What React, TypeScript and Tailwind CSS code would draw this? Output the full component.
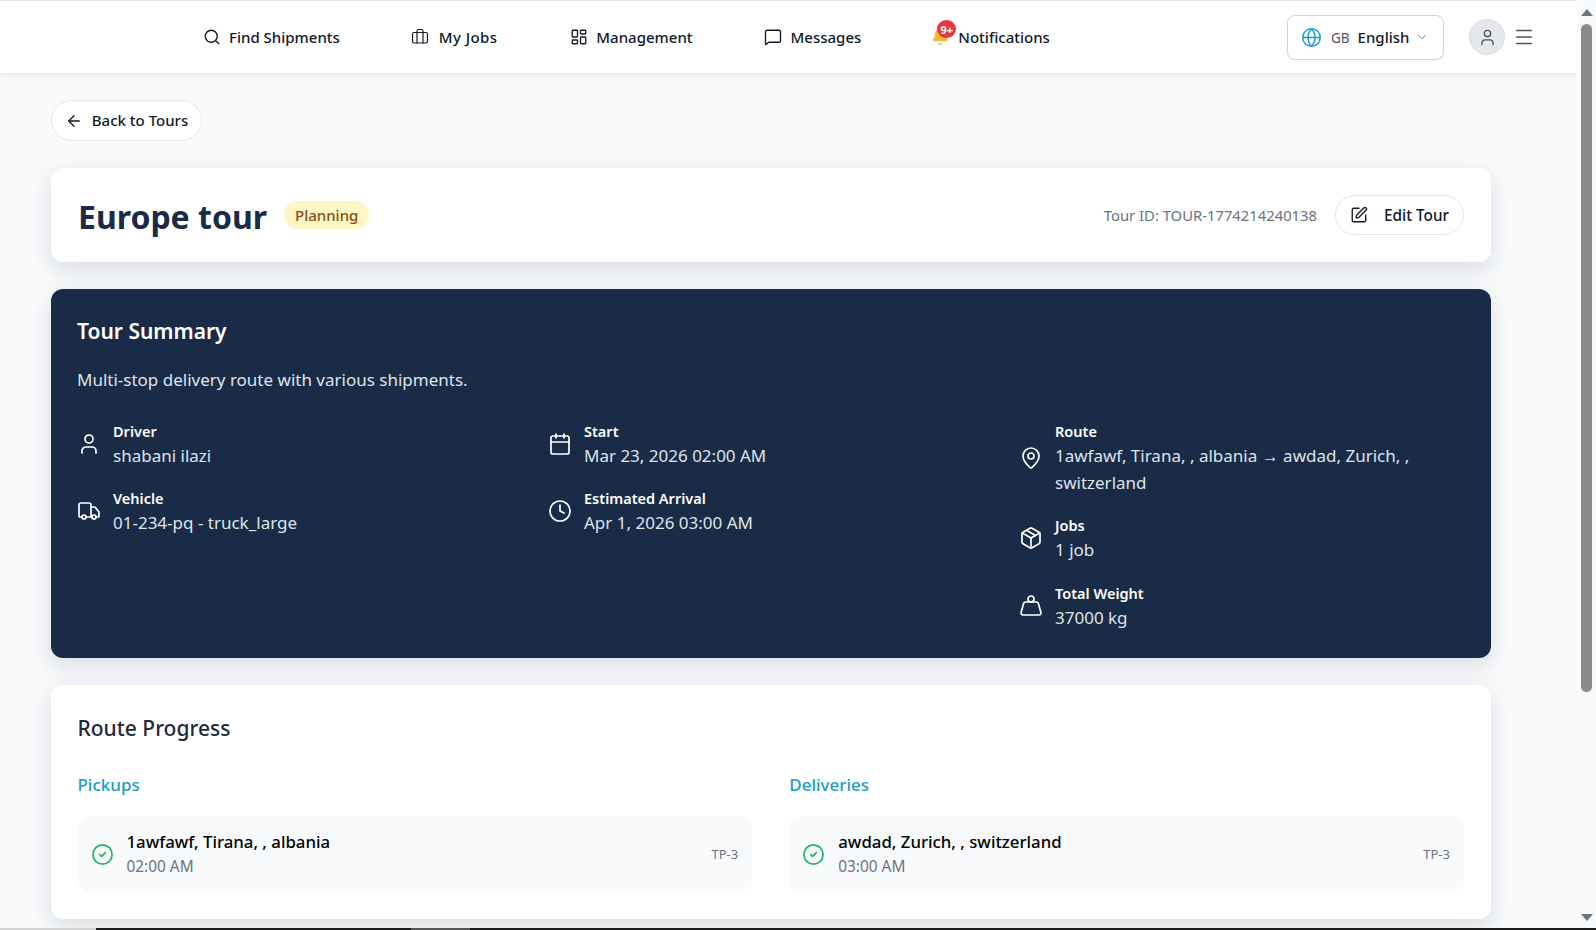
import { ArrowLeft, Bell, Briefcase, Calendar, ChevronDown, CircleCheck, Clock, Globe, LayoutDashboard, MapPin, Menu, MessageSquare, Package, Search, SquarePen, Truck, User, Weight } from "lucide-react";
import type { ReactNode } from "react";

function Info({ icon, label, children }: { icon: ReactNode; label: string; children: ReactNode }) {
  return (
    <div className="flex items-center gap-3">
      <div className="w-6 shrink-0 text-white">{icon}</div>
      <div className="min-w-0">
        <div className="text-[14.5px] leading-6 font-semibold text-white">{label}</div>
        <div className="text-[17px] leading-[26.5px] text-[#dfe3ea]">{children}</div>
      </div>
    </div>
  );
}

function Stop({ title, time }: { title: string; time: string }) {
  return (
    <div className="flex h-[76px] items-center rounded-xl bg-[#f8fafc] pr-[14px] pl-[13px]">
      <CircleCheck size={23} strokeWidth={1.8} className="text-[#22b566]" />
      <div className="ml-[13px] flex-1">
        <div className="text-[16.8px] leading-[24px] font-medium text-black">{title}</div>
        <div className="mt-[2px] text-[15.4px] leading-[22px] text-[#6b7280]">{time}</div>
      </div>
      <div className="translate-y-[1px] text-[13px] text-[#6b7280]">TP-3</div>
    </div>
  );
}

export default function App() {
  return (
    <div className="flex h-[930px] w-[1596px] flex-col overflow-hidden bg-white font-['Noto_Sans','Open_Sans',sans-serif]">
      <div className="flex min-h-0 flex-1">
        <div className="min-w-0 flex-1 overflow-hidden bg-[#f8fafc]">
          <header className="flex h-[73px] items-center border-t border-[#e8e8dc] bg-white pr-[42px] pl-[203px] shadow-[0_2px_5px_rgba(15,40,70,0.09)]">
            <div className="flex items-center gap-[71px] text-[15px] font-medium text-[#111827]">
              <div className="flex items-center gap-2">
                <Search size={18} strokeWidth={1.8} />
                <span>Find Shipments</span>
              </div>
              <div className="flex items-center gap-[10px]">
                <Briefcase size={18} strokeWidth={1.6} />
                <span className="tracking-[0.4px]">My Jobs</span>
              </div>
              <div className="ml-[2px] flex items-center gap-2">
                <LayoutDashboard size={18} strokeWidth={1.8} />
                <span>Management</span>
              </div>
              <div className="flex items-center gap-[9px]">
                <MessageSquare size={18} strokeWidth={1.8} />
                <span>Messages</span>
              </div>
              <div className="-ml-[1px] flex items-center gap-[11px]">
                <div className="relative h-[18px] w-[16px]">
                  <Bell size={18} fill="#f5b82e" strokeWidth={1.5} className="text-[#f5b82e]" />
                  <div className="absolute top-[-8px] left-[6px] flex h-[18px] w-[19px] items-center justify-center rounded-full bg-[#e5393f] text-[11px] leading-none font-bold text-white">9+</div>
                </div>
                <span>Notifications</span>
              </div>
            </div>
            <div className="ml-auto flex items-center">
              <div className="flex h-[45px] w-[157px] items-center rounded-lg border border-[#d1d5db] bg-white pl-[13px] shadow-[0_1px_2px_rgba(0,0,0,0.06)]">
                <Globe size={21} strokeWidth={1.7} className="text-[#1a9cc7]" />
                <span className="ml-[9px] translate-y-[1px] text-[13.5px] text-[#4b5563]">GB</span>
                <span className="ml-[8px] text-[15px] font-medium text-[#111827]">English</span>
                <ChevronDown size={14} strokeWidth={1.5} className="ml-[6px] text-[#6b7280]" />
              </div>
              <div className="ml-[25px] flex h-[36px] w-[36px] items-center justify-center rounded-full border border-[#d9dde3] bg-[#e5e7eb]">
                <User size={19} strokeWidth={1.7} className="text-[#4b5563]" />
              </div>
              <Menu size={22} strokeWidth={1.6} className="ml-[8px] text-[#4b5563]" />
            </div>
          </header>

          <main className="pt-[27px] pr-[86px] pl-[51px]">
            <div className="flex h-[41px] w-[151px] items-center justify-center gap-[9px] rounded-full border border-[#e5e7eb] bg-white text-[15px] font-medium text-[#111827]">
              <ArrowLeft size={18} strokeWidth={1.8} />
              <span>Back to Tours</span>
            </div>

            <section className="mt-[27px] flex h-[94px] items-center rounded-xl bg-white px-[27px] shadow-[0_8px_24px_rgba(15,30,50,0.13)]">
              <h1 className="translate-y-[2px] text-[32px] leading-10 font-bold text-[#1a2b47]">Europe tour</h1>
              <span className="ml-[17px] flex h-[28px] items-center rounded-full bg-[#fef6c3] px-[11px] text-[15px] font-medium text-[#854d0e]">Planning</span>
              <span className="ml-auto text-[14.8px] text-[#6b7280]">Tour ID: TOUR-1774214240138</span>
              <div className="ml-[18px] flex h-[40px] w-[129px] items-center justify-center gap-[16px] rounded-full border border-[#e5e7eb] bg-white text-[15.3px] font-medium text-[#111827]">
                <SquarePen size={18} strokeWidth={1.8} />
                <span>Edit Tour</span>
              </div>
            </section>

            <section className="mt-[27px] rounded-xl bg-[#1a2b47] pt-[26px] pr-[33px] pb-[27px] pl-[26px] shadow-[0_8px_24px_rgba(15,30,50,0.13)]">
              <h2 className="text-[21px] leading-8 font-semibold text-white">Tour Summary</h2>
              <p className="mt-[19px] text-[17px] leading-[27px] text-[#dfe3ea]">Multi-stop delivery route with various shipments.</p>
              <div className="mt-[26px] grid grid-cols-3 items-start gap-x-8">
                <div className="flex flex-col gap-[16.5px]">
                  <Info icon={<User size={24} strokeWidth={1.7} />} label="Driver">shabani ilazi</Info>
                  <Info icon={<Truck size={24} strokeWidth={1.7} />} label="Vehicle">01-234-pq - truck_large</Info>
                </div>
                <div className="flex flex-col gap-[16.5px]">
                  <Info icon={<Calendar size={24} strokeWidth={1.7} />} label="Start">Mar 23, 2026 02:00 AM</Info>
                  <Info icon={<Clock size={24} strokeWidth={1.7} />} label="Estimated Arrival">Apr 1, 2026 03:00 AM</Info>
                </div>
                <div className="flex flex-col gap-[17px]">
                  <Info icon={<MapPin size={24} strokeWidth={1.7} />} label="Route">1awfawf, Tirana, , albania → awdad, Zurich, , switzerland</Info>
                  <Info icon={<Package size={24} strokeWidth={1.7} />} label="Jobs">1 job</Info>
                  <Info icon={<Weight size={24} strokeWidth={1.7} />} label="Total Weight">37000 kg</Info>
                </div>
              </div>
            </section>

            <section className="mt-[27px] h-[234px] rounded-xl bg-white pt-[27px] pr-[27px] pl-[26.5px] shadow-[0_8px_24px_rgba(15,30,50,0.13)]">
              <h2 className="text-[21px] leading-8 font-medium text-[#1e293b]">Route Progress</h2>
              <div className="mt-[27px] grid grid-cols-2 gap-x-[37px]">
                <div>
                  <h3 className="text-[17px] leading-[28px] font-medium text-[#1a9cc7]">Pickups</h3>
                  <div className="mt-[17px]"><Stop title="1awfawf, Tirana, , albania" time="02:00 AM" /></div>
                </div>
                <div>
                  <h3 className="text-[17px] leading-[28px] font-medium text-[#1a9cc7]">Deliveries</h3>
                  <div className="mt-[17px]"><Stop title="awdad, Zurich, , switzerland" time="03:00 AM" /></div>
                </div>
              </div>
            </section>
          </main>
        </div>
        <div className="flex w-[19px] shrink-0 flex-col items-center bg-[#f9fafb]">
          <div className="mt-[9px] h-0 w-0 border-x-[6px] border-b-[7px] border-x-transparent border-b-[#6b7280]" />
          <div className="mt-[8px] h-[668px] w-[11px] rounded-full bg-[#8a8a8a]" />
          <div className="mt-auto mb-[7px] h-0 w-0 border-x-[6px] border-t-[7px] border-x-transparent border-t-[#6b7280]" />
        </div>
      </div>
      <div className="flex h-[2px] shrink-0">
        <div className="w-[96px] bg-[#d4d4d4]" />
        <div className="w-[315px] bg-[#1c1c1c]" />
        <div className="w-[59px] bg-[#555555]" />
        <div className="flex-1 bg-[#1c1c1c]" />
      </div>
    </div>
  );
}
